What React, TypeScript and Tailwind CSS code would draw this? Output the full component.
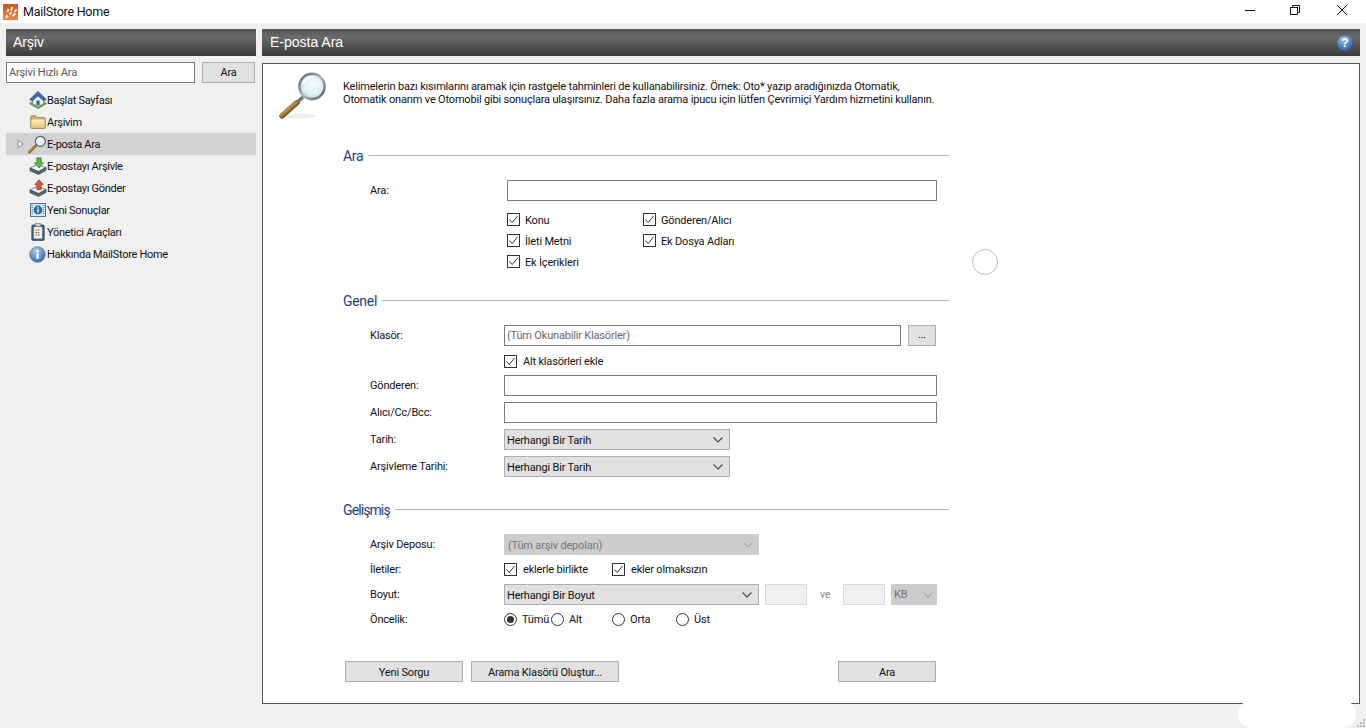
import React from 'react';

const Check = () => (
  <span className="flex h-[13px] w-[13px] shrink-0 items-center justify-center border border-[#333] bg-white">
    <svg width="11" height="11" viewBox="0 0 11 11" fill="none" stroke="#333" strokeWidth="1">
      <path d="M1.5 5.5 L4.2 8.5 L9.5 2" />
    </svg>
  </span>
);

const Radio = ({ on }: { on?: boolean }) => (
  <span className="flex h-[13px] w-[13px] shrink-0 items-center justify-center rounded-full border border-[#333] bg-white">
    {on ? <span className="h-[7px] w-[7px] rounded-full bg-[#333]" /> : null}
  </span>
);

const Chevron = ({ color = '#444' }: { color?: string }) => (
  <svg width="10" height="6" viewBox="0 0 10 6" fill="none" stroke={color} strokeWidth="1.1">
    <path d="M0.5 0.5 L5 5 L9.5 0.5" />
  </svg>
);

function SectionHeading({ title, className }: { title: string; className: string }) {
  return (
    <div className="flex h-5 items-center gap-[5px]">
      <span className={`text-[14px] text-[#1c3f78] ${className}`}>{title}</span>
      <span className="-mt-[2px] h-px flex-1 bg-[#b4b4b4]" />
    </div>
  );
}

function Row({ label, className, children }: { label?: string; className: string; children: React.ReactNode }) {
  return (
    <div className={`flex items-center ${className}`}>
      <span className="w-[161px] shrink-0 pl-[27px] pt-[2px]">{label}</span>
      {children}
    </div>
  );
}

// pad is the label's top padding: the check labels don't all sit at the same height
function CheckItem({ label, className, pad = 'pt-[2px]' }: { label: string; className: string; pad?: string }) {
  return (
    <span className={`flex items-center ${className}`}>
      <Check />
      <span className={pad}>{label}</span>
    </span>
  );
}

function RadioItem({ label, className }: { label: string; className: string }) {
  return (
    <span className={`flex items-center gap-[5px] ${className}`}>
      <Radio on={label === 'Tümü'} />
      <span className="pt-[2px]">{label}</span>
    </span>
  );
}

const Select = ({ label, className }: { label: string; className: string }) => (
  <div className={`flex h-[21px] items-center justify-between border border-[#adadad] bg-[#e1e1e1] pl-[2px] pr-[6px] ${className}`}>
    <span className="pt-[4px]">{label}</span>
    <Chevron />
  </div>
);

const Btn = ({ label, className }: { label: string; className: string }) => (
  <button type="button" className={`h-[21px] border border-[#adadad] bg-[#e1e1e1] text-[#111] ${className}`}>
    {label}
  </button>
);

const Header = ({ title, className, children }: { title: string; className: string; children?: React.ReactNode }) => (
  <div className={`flex h-[27px] shrink-0 items-center justify-between bg-gradient-to-b from-[#555555] via-[#6a6a6a] via-30% to-[#3a3a3a] pr-[7px] font-['Liberation_Sans',sans-serif] text-[14px] tracking-normal text-white ${className}`}>
    {title}
    {children}
  </div>
);

function HomeIcon() {
  return (
    <svg width="18" height="18" viewBox="0 0 18 18">
      <path d="M0.5 12.5 L9 17.5 L17.5 12.5 L9 8Z" fill="#7db35c" stroke="#3d6b2a" strokeWidth="0.7" />
      <path d="M3.5 7 V12.5 L9 15.5 L14.5 12.5 V7 L9 3Z" fill="#f4f4f4" stroke="#5d6a78" strokeWidth="0.6" />
      <path d="M0.8 8.5 L9 0.5 L17.2 8.5 L14.5 9.8 L9 4.8 L3.5 9.8Z" fill="#3a6ca6" stroke="#1f3f68" strokeWidth="0.7" />
      <rect x="7.4" y="9.5" width="3.2" height="4.8" fill="#35608f" />
    </svg>
  );
}

function FolderIcon() {
  return (
    <svg width="16" height="14" viewBox="0 0 16 14">
      <defs>
        <linearGradient id="folderFill" x1="0" y1="0" x2="0" y2="1">
          <stop offset="0" stopColor="#fbeec5" />
          <stop offset="1" stopColor="#e5c67c" />
        </linearGradient>
      </defs>
      <path d="M0.7 12.5 V2 Q0.7 0.8 2 0.8 H5.5 L7 2.6 H14 Q15.3 2.6 15.3 4 V12.5 Q15.3 13.4 14.2 13.4 H1.8 Q0.7 13.4 0.7 12.5Z" fill="#d4b368" stroke="#8f7638" strokeWidth="0.8" />
      <path d="M1.4 12.7 V5.4 Q1.4 4.6 2.2 4.6 H13.8 Q14.6 4.6 14.6 5.4 V12.7Z" fill="url(#folderFill)" />
    </svg>
  );
}

function SmallGlass() {
  return (
    <svg width="19" height="19" viewBox="0 0 19 19">
      <path d="M8 10.5 L1.5 17.2" stroke="#8c5e23" strokeWidth="2.6" strokeLinecap="round" />
      <path d="M8 10.5 L2 16.6" stroke="#d2a25c" strokeWidth="0.9" strokeLinecap="round" />
      <circle cx="12.3" cy="6.3" r="5" fill="#e8f1f5" stroke="#55656e" strokeWidth="1.2" />
    </svg>
  );
}

function TrayIcon({ arrow, edge, up }: { arrow: string; edge: string; up?: boolean }) {
  return (
    <svg width="18" height="18" viewBox="0 0 18 18">
      <path d="M1 11 L8 7.5 L17 10.5 L9.5 14.5Z" fill="#f1f1f1" stroke="#4d5864" strokeWidth="0.7" />
      <path d="M1 11 V13.8 L9.5 17.5 L17 13.5 V10.5 L9.5 14.5Z" fill="#56677a" stroke="#333f4c" strokeWidth="0.6" />
      {up ? (
        <path d="M10 0.8 L14.2 5.5 H12.2 V10.5 H7.8 V5.5 H5.8Z" fill={arrow} stroke={edge} strokeWidth="0.6" />
      ) : (
        <path d="M7.8 0.8 H12.2 V5.8 H14.6 L10 11 L5.4 5.8 H7.8Z" fill={arrow} stroke={edge} strokeWidth="0.6" />
      )}
    </svg>
  );
}

function InfoBoard() {
  return (
    <svg width="16" height="16" viewBox="0 0 16 16">
      <rect x="0.5" y="1.5" width="15" height="13" fill="#d6e6f4" stroke="#5a7186" />
      <path d="M2.2 3 V13 M13.8 3 V13" stroke="#6e8aa3" strokeDasharray="1 1" strokeWidth="1.4" />
      <circle cx="8" cy="8" r="4.4" fill="#2a6aab" />
      <rect x="7.3" y="7.3" width="1.5" height="3.1" fill="#fff" />
      <rect x="7.3" y="5.2" width="1.5" height="1.3" fill="#fff" />
    </svg>
  );
}

function ClipboardIcon() {
  return (
    <svg width="14" height="18" viewBox="0 0 14 18">
      <rect x="0.8" y="2" width="12.4" height="15.4" rx="1" fill="#3f6385" stroke="#2a4055" strokeWidth="0.7" />
      <rect x="2.8" y="4" width="8.4" height="11.6" fill="#f4f1e6" />
      <rect x="4.3" y="0.6" width="5.4" height="3.2" fill="#c3ced8" stroke="#4d5864" strokeWidth="0.5" />
      <path d="M4.5 7 H9.5 M4.5 9.5 H9.5 M4.5 12 H9.5" stroke="#7a4b3a" strokeWidth="1" strokeDasharray="1.5 1" />
    </svg>
  );
}

function InfoGlobe() {
  return (
    <svg width="17" height="17" viewBox="0 0 17 17">
      <defs>
        <radialGradient id="infoBlue" cx="0.4" cy="0.25" r="0.85">
          <stop offset="0" stopColor="#a8cdea" />
          <stop offset="1" stopColor="#28649f" />
        </radialGradient>
      </defs>
      <circle cx="8.5" cy="8.5" r="7.8" fill="url(#infoBlue)" stroke="#3b6c98" strokeWidth="0.6" />
      <rect x="7.4" y="7.2" width="2.4" height="5.6" fill="#fff" />
      <rect x="7.4" y="3.9" width="2.4" height="2.2" fill="#fff" />
    </svg>
  );
}

function BigGlass() {
  return (
    <svg width="52" height="52" viewBox="0 0 52 52">
      <defs>
        <radialGradient id="lens" cx="0.55" cy="0.4" r="0.7">
          <stop offset="0" stopColor="#f5fbff" />
          <stop offset="0.65" stopColor="#dcebf3" />
          <stop offset="1" stopColor="#9dbccb" />
        </radialGradient>
        <linearGradient id="rim" x1="0" y1="0" x2="1" y2="1">
          <stop offset="0" stopColor="#55656f" />
          <stop offset="0.5" stopColor="#aab7be" />
          <stop offset="1" stopColor="#4d5a63" />
        </linearGradient>
        <linearGradient id="handle" x1="0" y1="0" x2="1" y2="1">
          <stop offset="0" stopColor="#dcb276" />
          <stop offset="1" stopColor="#8a5c26" />
        </linearGradient>
      </defs>
      <ellipse cx="22" cy="44" rx="17" ry="2.5" fill="#000" opacity="0.07" />
      <path d="M20 30.5 L5 44" stroke="#7c5220" strokeWidth="5.4" strokeLinecap="round" />
      <path d="M19.5 30 L4.6 43.4" stroke="url(#handle)" strokeWidth="3.2" strokeLinecap="round" />
      <path d="M26 25 L20.5 30" stroke="#6f7468" strokeWidth="3.4" />
      <circle cx="35" cy="14.5" r="12.6" fill="url(#lens)" stroke="url(#rim)" strokeWidth="2.6" />
      <path d="M26 11 A10 10 0 0 1 36 5.4" fill="none" stroke="#fff" strokeWidth="1.6" />
    </svg>
  );
}

const navItems: { label: string; icon: React.ReactNode; active?: boolean }[] = [
  { label: 'Başlat Sayfası', icon: <HomeIcon /> },
  { label: 'Arşivim', icon: <FolderIcon /> },
  { label: 'E-posta Ara', icon: <SmallGlass />, active: true },
  { label: 'E-postayı Arşivle', icon: <TrayIcon arrow="#58b947" edge="#2a6e2a" /> },
  { label: 'E-postayı Gönder', icon: <TrayIcon arrow="#d9573a" edge="#7a2a1a" up /> },
  { label: 'Yeni Sonuçlar', icon: <InfoBoard /> },
  { label: 'Yönetici Araçları', icon: <ClipboardIcon /> },
  { label: 'Hakkında MailStore Home', icon: <InfoGlobe /> },
];

export default function App() {
  return (
    <div className="relative flex h-[728px] w-[1366px] flex-col overflow-hidden bg-[#f0f0f0] font-['Roboto',sans-serif] text-[11px] tracking-[-0.18px] text-[#111]">
      {/* title bar */}
      <div className="flex h-[23px] shrink-0 items-center bg-white pl-[3px]">
        <svg width="15" height="16" viewBox="0 0 15 16">
          <defs>
            <linearGradient id="logoFill" x1="0" y1="0" x2="0" y2="1">
              <stop offset="0" stopColor="#c9561f" />
              <stop offset="1" stopColor="#ee8a3c" />
            </linearGradient>
          </defs>
          <rect width="15" height="16" fill="url(#logoFill)" />
          <path d="M2 14.5 L6 12.5 L3.5 10.5Z" fill="#fff" />
          <path d="M6.5 10.5 L8.5 8 M9.5 12 L12.5 9.5 M4.5 8 L5.5 5 M8 6.5 L9.5 3 M11.5 8 L13.5 5.5" stroke="#fff" strokeWidth="1.8" fill="none" />
        </svg>
        <span className="ml-[5px] pt-[2px] text-[12.5px] tracking-[-0.25px] text-[#111]">MailStore Home</span>
        <div className="ml-auto -mt-[3px] flex items-center pr-[19px]">
          <svg width="10" height="10" viewBox="0 0 10 10" stroke="#111" strokeWidth="1" fill="none"><path d="M0 5.5 H10" /></svg>
          <svg className="ml-[35px]" width="10" height="10" viewBox="0 0 10 10" stroke="#111" strokeWidth="1" fill="none">
            <rect x="0.5" y="2.5" width="7" height="7" />
            <path d="M2.5 2.5 V0.5 H9.5 V7.5 H7.5" />
          </svg>
          <svg className="ml-[37px]" width="10" height="10" viewBox="0 0 10 10" stroke="#111" strokeWidth="1" fill="none"><path d="M0 0 L10 10 M10 0 L0 10" /></svg>
        </div>
      </div>

      <div className="flex flex-1 gap-[6px] pl-[6px] pr-[6px] pt-[6px]">
        {/* sidebar */}
        <div className="flex w-[250px] shrink-0 flex-col">
          <Header title="Arşiv" className="pl-[7px]" />
          <div className="mt-[6px] flex items-center justify-between">
            <div className="flex h-[21px] w-[189px] items-center border border-[#7a7a7a] bg-white pl-[2px] pt-[2px] text-[#555]">Arşivi Hızlı Ara</div>
            <Btn label="Ara" className="mr-[1px] h-[18px] w-[53px] pt-[2px]" />
          </div>
          <div className="mt-[6px] flex flex-col tracking-[-0.3px]">
            {navItems.map((item) => (
              <div key={item.label} className={`flex h-[22px] items-center ${item.active ? 'bg-[#d2d2d2]' : ''}`}>
                <span className="flex w-[22px] shrink-0 justify-end pr-[4px]">
                  {item.active ? (
                    <svg width="7" height="10" viewBox="0 0 7 10" fill="#fff" stroke="#888"><path d="M1 1 L6 5 L1 9Z" /></svg>
                  ) : null}
                </span>
                <span className="flex w-[19px] shrink-0 justify-center">{item.icon}</span>
                <span className="pt-[2px]">{item.label}</span>
              </div>
            ))}
          </div>
        </div>

        {/* main */}
        <div className="flex flex-1 flex-col">
          <Header title="E-posta Ara" className="pl-[8px]">
            <svg width="16" height="16" viewBox="0 0 16 16">
              <defs>
                <radialGradient id="helpBlue" cx="0.4" cy="0.25" r="0.85">
                  <stop offset="0" stopColor="#9cc2f0" />
                  <stop offset="1" stopColor="#1f56ac" />
                </radialGradient>
              </defs>
              <circle cx="8" cy="8" r="7.6" fill="url(#helpBlue)" />
              <text x="8" y="12.4" textAnchor="middle" fontSize="12" fontWeight="700" fill="#fff" fontFamily="Liberation Sans">?</text>
            </svg>
          </Header>
          <div className="mt-[7px] flex h-[641px] w-[1098px] flex-col border border-[#555] bg-white pl-[80px]">
            <div className="flex h-[82px] shrink-0">
              <div className="-ml-[66px] mr-[14px] mt-[8px] w-[52px] shrink-0">
                <BigGlass />
              </div>
              <p className="mt-[16px] w-[600px] whitespace-nowrap leading-[13px]">
                Kelimelerin bazı kısımlarını aramak için rastgele tahminleri de kullanabilirsiniz. Örnek: Oto* yazıp aradığınızda Otomatik,
                <br />
                Otomatik onarım ve Otomobil gibi sonuçlara ulaşırsınız. Daha fazla arama ipucu için lütfen Çevrimiçi Yardım hizmetini kullanın.
              </p>
            </div>

            <div className="w-[606px]">
              <SectionHeading title="Ara" className="tracking-[-0.3px]" />
              <Row label="Ara:" className="mt-[14px] h-[21px]">
                <div className="ml-[3px] h-[21px] w-[430px] border border-[#7a7a7a] bg-white" />
              </Row>
              <div className="ml-[164px] mt-[8px] grid w-[300px] grid-cols-[136px_1fr] auto-rows-[21px] items-center">
                <CheckItem label="Konu" className="gap-[5px]" pad="pt-[4px]" />
                <CheckItem label="Gönderen/Alıcı" className="gap-[5px]" pad="pt-[4px]" />
                <CheckItem label="İleti Metni" className="gap-[5px]" pad="pt-[4px]" />
                <CheckItem label="Ek Dosya Adları" className="gap-[5px]" pad="pt-[4px]" />
                <CheckItem label="Ek İçerikleri" className="gap-[5px]" pad="pt-[4px]" />
              </div>

              <div className="mt-[19px]">
                <SectionHeading title="Genel" className="tracking-[-0.3px]" />
              </div>
              <Row label="Klasör:" className="mt-[14px] h-[21px]">
                <div className="flex h-[21px] w-[397px] items-center border border-[#7a7a7a] bg-white pl-[2px] pt-[2px] text-[#666]">(Tüm Okunabilir Klasörler)</div>
                <Btn label="..." className="ml-[7px] w-[28px]" />
              </Row>
              <Row className="mt-[5px] h-5">
                <CheckItem label="Alt klasörleri ekle" className="gap-[6px]" />
              </Row>
              <Row label="Gönderen:" className="mt-[4px] h-[21px]">
                <div className="h-[21px] w-[433px] border border-[#7a7a7a] bg-white" />
              </Row>
              <Row label="Alıcı/Cc/Bcc:" className="mt-[6px] h-[21px]">
                <div className="h-[21px] w-[433px] border border-[#7a7a7a] bg-white" />
              </Row>
              <Row label="Tarih:" className="mt-[6px] h-[21px]">
                <Select label="Herhangi Bir Tarih" className="w-[226px]" />
              </Row>
              <Row label="Arşivleme Tarihi:" className="mt-[6px] h-[21px]">
                <Select label="Herhangi Bir Tarih" className="w-[226px]" />
              </Row>

              <div className="mt-[23px]">
                <SectionHeading title="Gelişmiş" className="tracking-[-0.9px]" />
              </div>
              <Row label="Arşiv Deposu:" className="mt-[14px] h-[21px]">
                <div className="flex h-[21px] w-[255px] items-center justify-between bg-[#cccccc] pl-[4px] pr-[6px] text-[#777]">
                  <span className="pt-[4px]">(Tüm arşiv depoları)</span>
                  <Chevron color="#aaa" />
                </div>
              </Row>
              <Row label="İletiler:" className="mt-[4px] h-5">
                <CheckItem label="eklerle birlikte" className="w-[108px] gap-[6px]" />
                <CheckItem label="ekler olmaksızın" className="gap-[6px]" />
              </Row>
              <Row label="Boyut:" className="mt-[5px] h-[21px]">
                <Select label="Herhangi Bir Boyut" className="w-[255px]" />
                <div className="ml-[6px] h-[21px] w-[42px] border border-[#d9d9d9] bg-[#f0f0f0]" />
                <span className="w-[36px] pt-[2px] text-center text-[#888]">ve</span>
                <div className="h-[21px] w-[42px] border border-[#d9d9d9] bg-[#f0f0f0]" />
                <div className="ml-[6px] flex h-[21px] w-[46px] items-center justify-between bg-[#cccccc] pl-[3px] pr-[4px] text-[#777]">
                  <span className="pt-[2px]">KB</span>
                  <Chevron color="#aaa" />
                </div>
              </Row>
              <Row label="Öncelik:" className="mt-[4px] h-5">
                <RadioItem label="Tümü" className="w-[47px]" />
                <RadioItem label="Alt" className="w-[61px]" />
                <RadioItem label="Orta" className="w-[64px]" />
                <RadioItem label="Üst" className="" />
              </Row>

              <div className="mt-[32px] flex pl-[2px]">
                <Btn label="Yeni Sorgu" className="w-[118px] pt-[3px]" />
                <Btn label="Arama Klasörü Oluştur..." className="ml-[8px] w-[148px] pt-[3px]" />
                <Btn label="Ara" className="ml-[219px] w-[98px] pt-[3px]" />
              </div>
            </div>
          </div>
        </div>
      </div>

      {/* overlays: cursor ring, white smudge, resize grip */}
      <div className="absolute left-[972px] top-[249px] h-[26px] w-[26px] rounded-full border border-[#b9b9c4] bg-white" />
      <div className="absolute bottom-0 left-[1238px] h-[28px] w-[118px] rounded-[14px] bg-white" />
      <div className="absolute bottom-[1px] right-[1px] grid grid-cols-3 gap-px">
        <span />
        <span />
        <span className="h-[2px] w-[2px] bg-[#bbb]" />
        <span />
        <span className="h-[2px] w-[2px] bg-[#bbb]" />
        <span className="h-[2px] w-[2px] bg-[#bbb]" />
        <span className="h-[2px] w-[2px] bg-[#bbb]" />
        <span className="h-[2px] w-[2px] bg-[#bbb]" />
        <span className="h-[2px] w-[2px] bg-[#bbb]" />
      </div>
    </div>
  );
}
